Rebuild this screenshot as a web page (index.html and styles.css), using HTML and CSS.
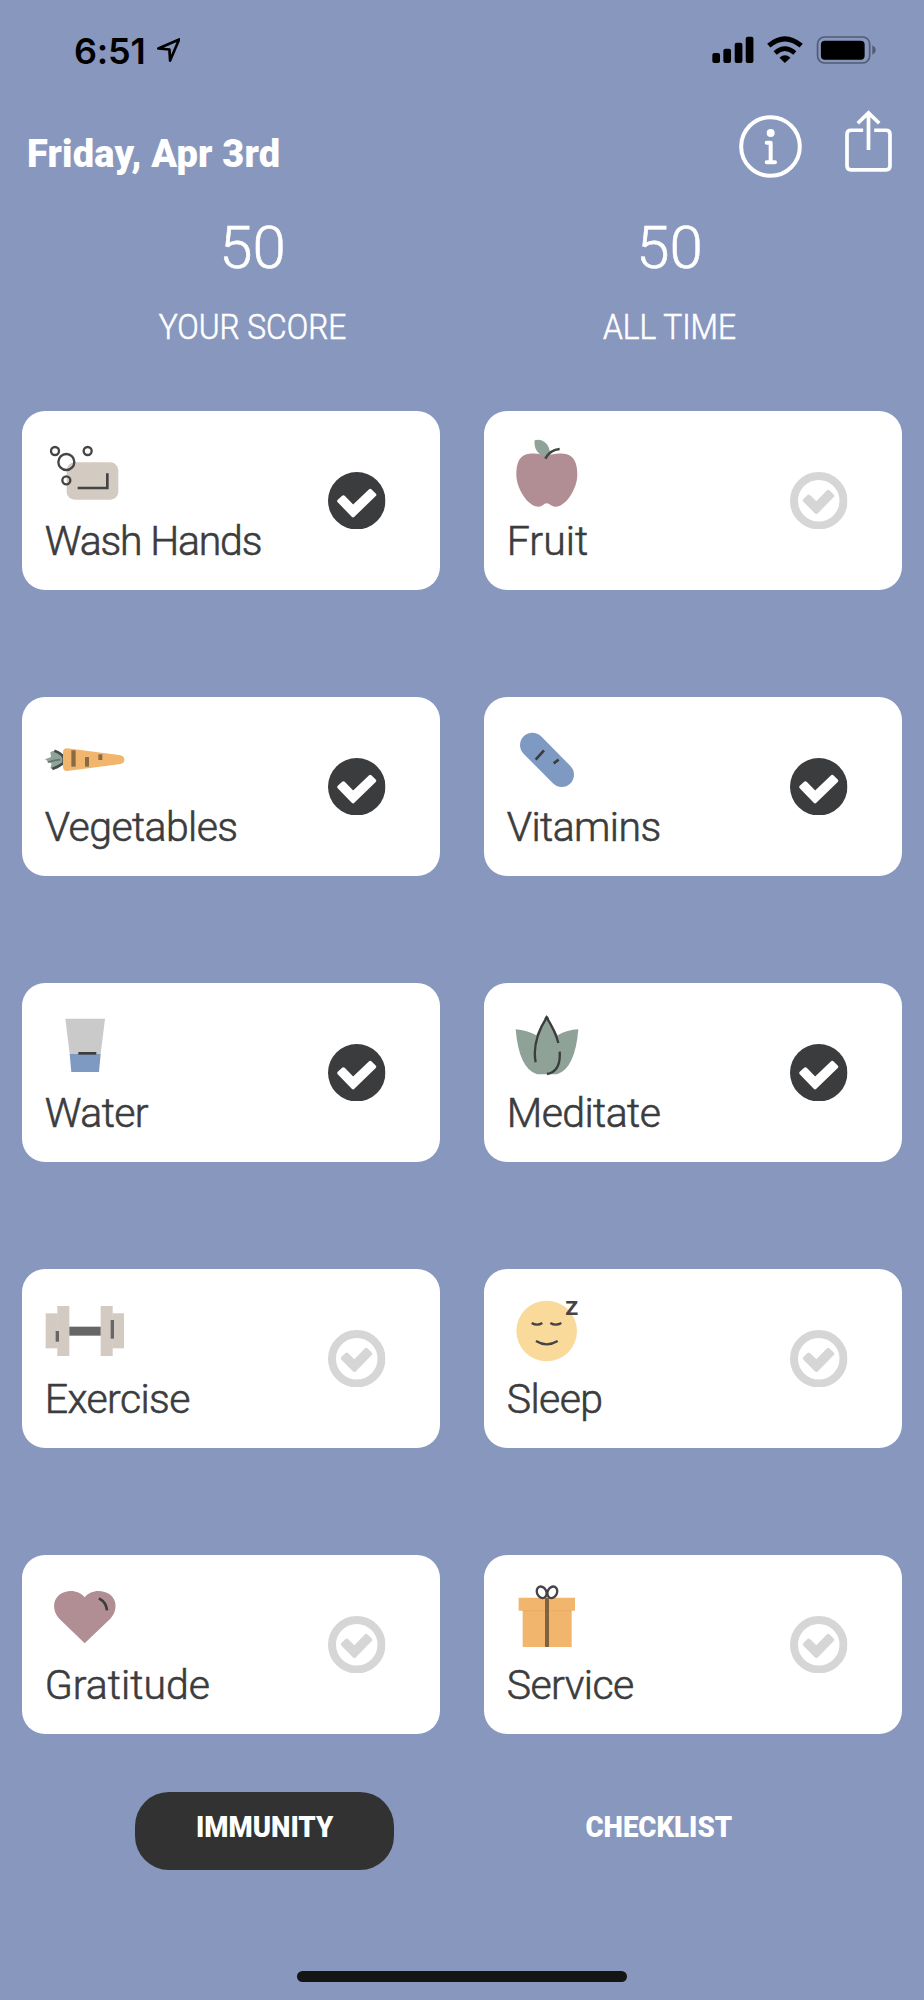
FILE: index.html
```
<!DOCTYPE html>
<html lang="en">
<head>
  <meta charset="UTF-8" />
  <meta name="viewport" content="width=device-width, initial-scale=1" />
  <title>Immunity</title>
  <link rel="stylesheet" href="styles.css">
</head>
<body>
  <svg class="sprite" aria-hidden="true">
    <symbol id="check-on" viewBox="0 0 172 172">
      <circle cx="86" cy="86" r="86" fill="#3b3c3e" />
      <path d="M33 87 46 75 75 105 126 56 139 68 75 130Z" fill="#fff" stroke="#fff" stroke-width="11" stroke-linejoin="round" />
    </symbol>
    <symbol id="check-off" viewBox="0 0 172 172">
      <circle cx="86" cy="86" r="74" fill="none" stroke="#d6d6d6" stroke-width="24" />
      <path d="M44 85 56 73 79 95 114 59 127 71 79 120Z" fill="#d6d6d6" stroke="#d6d6d6" stroke-width="11" stroke-linejoin="round" />
    </symbol>
  </svg>

  <div class="status-bar">
    <div class="clock">
      <span class="time">6:51</span>
      <svg class="location" viewBox="0 0 70 71"><path d="M4 31 66 4 39 67 37 34Z" fill="none" stroke="#000" stroke-width="8" stroke-linejoin="round" /></svg>
    </div>
    <svg class="signals" viewBox="751 110 491 82">
      <rect x="752" y="160" width="23" height="30" rx="6" />
      <rect x="785" y="147" width="23" height="43" rx="6" />
      <rect x="819" y="129" width="23" height="61" rx="6" />
      <rect x="852" y="111" width="23" height="79" rx="6" />
      <path d="M921 138Q969 97 1018 138" fill="none" stroke="#000" stroke-width="15" />
      <path d="M940 160Q969 134 999 160" fill="none" stroke="#000" stroke-width="14" />
      <path d="M953 174Q969 160 986 174L969 190Z" />
      <rect x="1067" y="112" width="156" height="78" rx="21" fill="none" stroke="#535b73" stroke-width="5" />
      <rect x="1077" y="123" width="131" height="57" rx="12" />
      <path d="M1231 137Q1241 142 1241 151T1231 165Z" fill="#535b73" />
    </svg>
  </div>

  <header>
    <h1>Friday, Apr 3rd</h1>
    <div class="actions">
      <svg class="info" viewBox="0 0 189 189" fill="none" stroke="#fff" stroke-linecap="round" stroke-linejoin="round">
        <circle cx="94.500" cy="94.500" r="88" stroke-width="12" />
        <circle cx="95" cy="54" r="12" fill="#fff" stroke="none" />
        <path d="M83 83H95V142M83 142H108" stroke-width="12" />
      </svg>
      <svg class="share" viewBox="0 0 140 184" fill="none" stroke="#fff" stroke-width="11">
        <path d="M54 60H18Q6 60 6 72V166Q6 178 18 178H122Q134 178 134 166V72Q134 60 122 60H87" />
        <path d="M70 119V8M38 39 70 8 102 39" />
      </svg>
    </div>
  </header>

  <section class="scores">
    <div class="score">
      <div class="points">50</div>
      <div class="caption">YOUR SCORE</div>
    </div>
    <div class="score">
      <div class="points">50</div>
      <div class="caption">ALL TIME</div>
    </div>
  </section>

  <main class="habits">
    <div class="card">
      <div class="habit">
        <svg class="icon" viewBox="0 0 240 240">
          <rect x="65" y="88" width="155" height="112" rx="24" fill="#d3cac1" />
          <g fill="none" stroke="#444" stroke-width="7">
            <circle cx="30" cy="54" r="12" />
            <circle cx="64" cy="87" r="24" />
            <circle cx="128" cy="54" r="12" />
            <circle cx="64" cy="142" r="12" />
            <path d="M98 165H187V121" stroke-width="8" />
          </g>
        </svg>
        <span class="label wide">Wash Hands</span>
      </div>
      <svg class="check"><use href="#check-on" /></svg>
    </div>

    <div class="card">
      <div class="habit">
        <svg class="icon" viewBox="0 0 240 240">
          <path d="M119 70C105 62 85 60 68 62 40 64 28 85 28 125 28 165 62 221 95 221 108 221 110 211 119 211S132 221 145 221C178 221 211 165 211 125 211 85 198 64 170 62 153 60 133 62 119 70Z" fill="#b08e94" />
          <path d="M116 71C94 68 79 46 83 22 106 14 128 36 128 56Z" fill="#8fa398" />
          <path d="M115 77Q130 50 158 48" fill="none" stroke="#444" stroke-width="8" />
        </svg>
        <span class="label narrow">Fruit</span>
      </div>
      <svg class="check"><use href="#check-off" /></svg>
    </div>

    <div class="card">
      <div class="habit">
        <svg class="icon" viewBox="0 0 240 240">
          <path d="M0 121 18 114 16 100Q30 90 44 104L56 112V134L40 148Q28 154 16 148L20 134Z" fill="#8fa398" />
          <path d="M28 95Q50 102 56 116V132Q42 142 22 150" fill="none" stroke="#444b48" stroke-width="8" />
          <path d="M8 130Q30 122 46 122" fill="none" stroke="#66736c" stroke-width="5" />
          <path d="M66 88 222 108Q238 110 238 122T222 136L66 156Q55 157 54 144V100Q55 87 66 88Z" fill="#f1b56d" />
          <g fill="#8a6a45">
            <rect x="79" y="94" width="13" height="49" />
            <rect x="120" y="114" width="12" height="29" />
            <rect x="160" y="106" width="12" height="17" />
          </g>
        </svg>
        <span class="label">Vegetables</span>
      </div>
      <svg class="check"><use href="#check-on" /></svg>
    </div>

    <div class="card">
      <div class="habit">
        <svg class="icon" viewBox="0 0 240 240" fill="none">
          <path d="M76 78 164 167" stroke="#7f9ac2" stroke-width="74" stroke-linecap="round" />
          <path d="M86 122 111 94M140 133 155 122" stroke="#3b3c3e" stroke-width="8" />
        </svg>
        <span class="label">Vitamins</span>
      </div>
      <svg class="check"><use href="#check-on" /></svg>
    </div>

    <div class="card">
      <div class="habit">
        <svg class="icon" viewBox="0 0 240 240">
          <path d="M61 41H180L167 147H74Z" fill="#cacaca" />
          <path d="M74 147H167L162 201H79Z" fill="#7f9ac2" />
          <path d="M100 145H154" stroke="#3b3c3e" stroke-width="8" />
        </svg>
        <span class="label">Water</span>
      </div>
      <svg class="check"><use href="#check-on" /></svg>
    </div>

    <div class="card">
      <div class="habit">
        <svg class="icon" viewBox="0 0 240 240" fill="none">
          <path d="M26 73Q60 76 88 91 98 65 119 37 140 65 152 91 180 74 214 73 204 192 150 208H90Q36 192 26 73Z" fill="#8fa298" />
          <path d="M86 172C76 120 95 75 119 37 136 65 148 88 154 114M158 140Q162 200 120 207" stroke="#3b3c3e" stroke-width="7" />
          <circle cx="119" cy="40" r="6" fill="#3b3c3e" />
        </svg>
        <span class="label">Meditate</span>
      </div>
      <svg class="check"><use href="#check-on" /></svg>
    </div>

    <div class="card">
      <div class="habit">
        <svg class="icon" viewBox="0 0 240 240">
          <g fill="#d3cac1">
            <rect x="2" y="67" width="36" height="105" />
            <rect x="37" y="45" width="36" height="150" />
            <rect x="167" y="45" width="36" height="150" />
            <rect x="202" y="67" width="35" height="105" />
          </g>
          <g fill="#666">
            <rect x="73" y="107" width="94" height="27" />
            <rect x="32" y="120" width="10" height="32" />
            <rect x="197" y="87" width="10" height="56" />
          </g>
        </svg>
        <span class="label">Exercise</span>
      </div>
      <svg class="check"><use href="#check-off" /></svg>
    </div>

    <div class="card">
      <div class="habit">
        <svg class="icon" viewBox="0 0 240 240">
          <circle cx="119" cy="120" r="91" fill="#f9da9b" />
          <path d="M74 96Q90 106 106 96M130 96Q146 106 163 96M87 150Q119 170 152 150" fill="none" stroke="#444" stroke-width="7" />
          <text class="snore" x="174" y="72">z</text>
        </svg>
        <span class="label">Sleep</span>
      </div>
      <svg class="check"><use href="#check-off" /></svg>
    </div>

    <div class="card">
      <div class="habit">
        <svg class="icon" viewBox="0 0 240 240">
          <path d="M119 199 43 125C20 100 24 68 43 53 68 36 101 39 119 61 137 39 170 36 196 53 215 68 219 100 196 125Z" fill="#b08e94" />
          <path d="M162 64Q184 76 186 100" fill="none" stroke="#3b3c3e" stroke-width="8" />
        </svg>
        <span class="label narrow">Gratitude</span>
      </div>
      <svg class="check"><use href="#check-off" /></svg>
    </div>

    <div class="card">
      <div class="habit">
        <svg class="icon" viewBox="0 0 240 240">
          <path d="M35 62H204V101H194V210H47V101H35Z" fill="#f1b56d" />
          <path d="M47 101H194" stroke="#e8a962" stroke-width="2" />
          <path d="M120 62V210" stroke="#7f6240" stroke-width="12" />
          <g fill="none" stroke="#444" stroke-width="7">
            <ellipse cx="104" cy="46" rx="14" ry="18" transform="rotate(-25 104 46)" />
            <ellipse cx="136" cy="46" rx="14" ry="18" transform="rotate(25 136 46)" />
          </g>
        </svg>
        <span class="label">Service</span>
      </div>
      <svg class="check"><use href="#check-off" /></svg>
    </div>
  </main>

  <nav>
    <button type="button" class="tab active"><span>IMMUNITY</span></button>
    <button type="button" class="tab"><span>CHECKLIST</span></button>
  </nav>
  <div class="home-indicator"></div>
</body>
</html>
```
FILE: styles.css
```
* { box-sizing: border-box; }
body { margin: 0; width: 924px; height: 2000px; overflow: hidden; background: #8897be; color: #fff; font-family: Roboto, sans-serif; }
svg { display: block; flex: none; }
.sprite { display: none; }

.status-bar { display: flex; justify-content: space-between; height: 100px; padding: 36px 48px 0 74px; }
.clock { display: flex; gap: 11px; color: #000; }
.time { font: 600 36px/30px Inter, sans-serif; letter-spacing: -0.2px; }
.location { width: 23.500px; height: 24px; margin-top: 2px; }
.signals { width: 164px; height: 28px; }

header { display: flex; justify-content: space-between; height: 112px; padding: 10px 32px 0 27px; }
h1 { margin: 20px 0 0; font-size: 38px; line-height: 48px; font-weight: 900; letter-spacing: 0.200px; }
.actions { display: flex; gap: 43px; }
.info { width: 63px; height: 63px; margin-top: 5px; }
.share { width: 47px; height: 62px; }

.scores { display: flex; height: 199px; padding: 1px 44px 0; }
.score { width: 417px; text-align: center; font-weight: 300; -webkit-text-stroke: 0.6px #fff; }
.points { font-size: 60px; line-height: 70px; }
.caption { margin-top: 24px; font-size: 35px; line-height: 42px; transform: scaleX(0.905); }

.habits { display: grid; grid-template-columns: 417.500px 417.500px; grid-auto-rows: 178.500px; gap: 107.500px 44.500px; padding: 0 22.300px; }
.card { display: flex; justify-content: space-between; align-items: center; padding: 0 54px 0 22.500px; background: #fff; border-radius: 23px; }
.habit { display: flex; flex-direction: column; align-self: flex-start; padding-top: 22px; }
.icon { width: 80px; height: 80px; }
.label { margin-top: 4px; color: #3b3c3e; font-size: 41px; line-height: 48px; font-weight: 300; letter-spacing: -0.6px; white-space: nowrap; -webkit-text-stroke: 0.6px #3b3c3e; }
.label.wide { letter-spacing: -1.2px; }
.label.narrow { letter-spacing: 0; }
.check { width: 57.500px; height: 57.500px; }
.snore { font-size: 80px; font-weight: 500; fill: #444; }

nav { display: flex; justify-content: space-evenly; margin-top: 58px; }
.tab { width: 259px; height: 78.500px; padding: 0 0 7px; border: 0; border-radius: 34px; background: none; color: #fff; font: 900 30px/36px Roboto, sans-serif; }
.tab span { display: inline-block; transform: scaleX(0.92); }
.active { background: #323232; }
.home-indicator { width: 330px; height: 11px; margin: 101px auto 0; border-radius: 6px; background: #151515; }
```
